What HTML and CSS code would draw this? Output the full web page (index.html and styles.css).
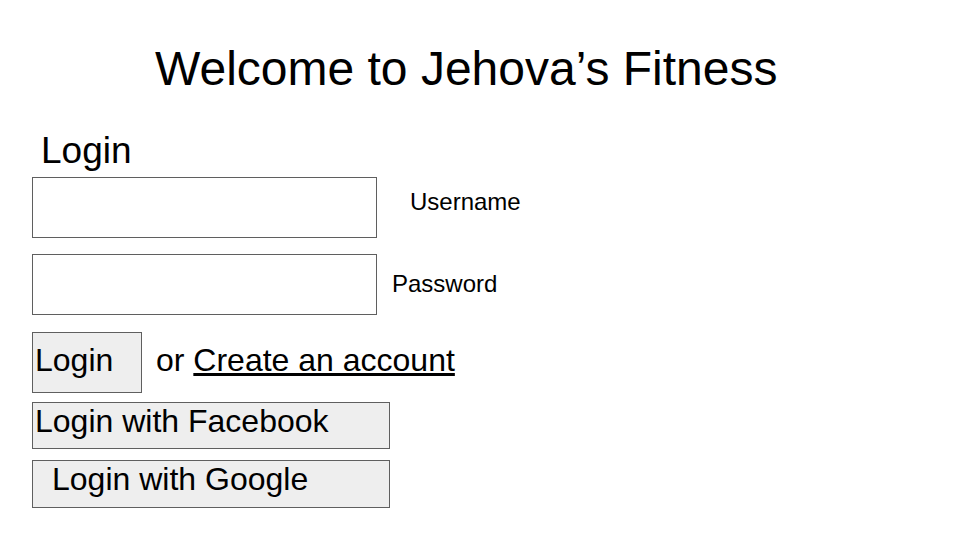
FILE: index.html
```html
<!DOCTYPE html>
<html lang="en">
<head>
<meta charset="utf-8">
<title>Jehova's Fitness – Login</title>
<link rel="stylesheet" href="styles.css">
</head>
<body>
<main class="page">
  <h1 class="title">Welcome to Jehova’s Fitness</h1>
  <h2 class="section">Login</h2>
  <div class="field-row">
    <div class="input-box"></div>
    <span class="label label-user">Username</span>
  </div>
  <div class="field-row field-row-pass">
    <div class="input-box"></div>
    <span class="label label-pass">Password</span>
  </div>
  <div class="action-row">
    <div class="btn btn-login">Login</div>
    <span class="or-text">or <a class="link" href="#">Create an account</a></span>
  </div>
  <div class="btn btn-wide btn-facebook">Login with Facebook</div>
  <div class="btn btn-wide btn-google">Login with Google</div>
</main>
</body>
</html>
```
FILE: styles.css
```css
* { box-sizing: border-box; }
html, body { margin: 0; padding: 0; background: #ffffff; }
body {
  font-family: "Liberation Sans", Arial, sans-serif;
  color: #000000;
  width: 960px;
  height: 540px;
  overflow: hidden;
}
.page {
  padding-left: 32px;
  display: flex;
  flex-direction: column;
  align-items: flex-start;
}
.title {
  margin: 41px 0 0 123px;
  font-size: 48px;
  line-height: 1.15;
  font-weight: normal;
}
.section {
  margin: 34px 0 0 9px;
  font-size: 37px;
  line-height: 1.15;
  font-weight: normal;
}
.field-row {
  display: flex;
  align-items: flex-start;
  margin-top: 4px;
}
.field-row-pass { margin-top: 16px; }
.input-box {
  width: 345px;
  height: 61px;
  border: 1px solid #5f5f5f;
  background: #ffffff;
}
.label {
  font-size: 24px;
  line-height: 1.15;
}
.label-user { margin-left: 33px; padding-top: 11px; }
.label-pass { margin-left: 15px; padding-top: 16px; }
.action-row {
  display: flex;
  align-items: flex-start;
  margin-top: 17px;
}
.btn {
  border: 1px solid #5f5f5f;
  background: #eeeeee;
  font-size: 32px;
  line-height: 1.15;
}
.btn-login {
  width: 110px;
  height: 61px;
  padding: 9px 0 0 2px;
}
.or-text {
  margin-left: 14px;
  padding-top: 10px;
  font-size: 32px;
  line-height: 1.15;
}
.link {
  color: #000000;
  text-decoration: underline;
}
.btn-wide {
  width: 358px;
  line-height: 1.1;
}
.btn-facebook {
  margin-top: 9px;
  height: 47px;
  padding: 1px 0 0 2px;
}
.btn-google {
  margin-top: 11px;
  height: 48px;
  padding: 1px 0 0 19px;
}
```
